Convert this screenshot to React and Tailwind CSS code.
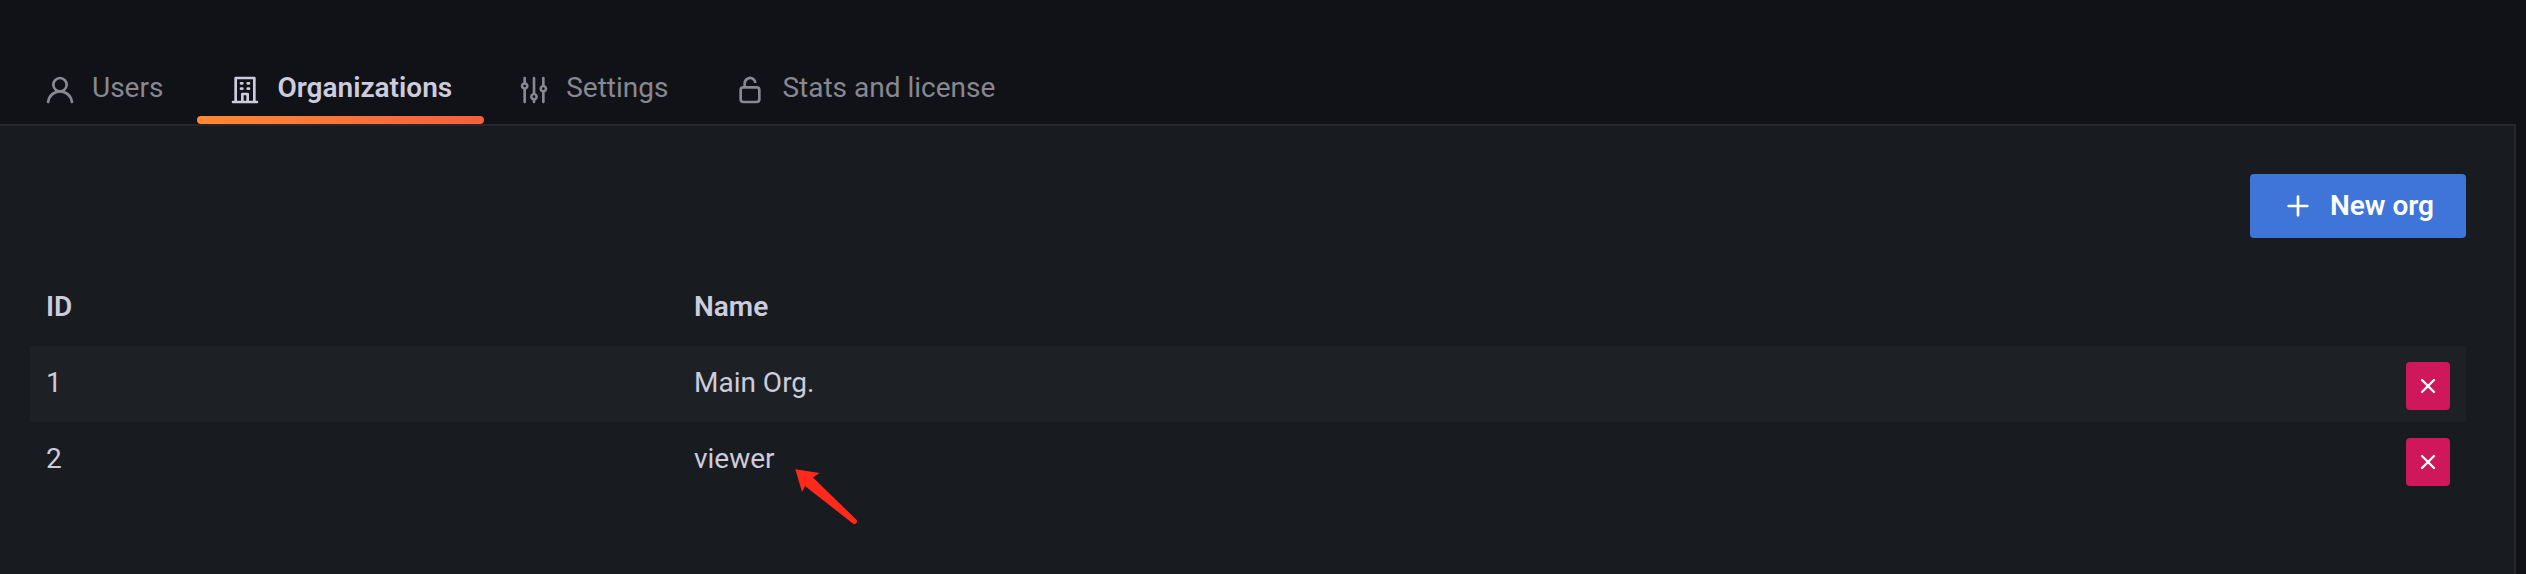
import React from "react";

const icons = {
  user: "M15.71,12.71a6,6,0,1,0-7.42,0,10,10,0,0,0-6.22,8.18,1,1,0,0,0,2,.22,8,8,0,0,1,15.9,0,1,1,0,0,0,1,.89h.11a1,1,0,0,0,.88-1.1A10,10,0,0,0,15.71,12.71ZM12,12a4,4,0,1,1,4-4A4,4,0,0,1,12,12Z",
  building:
    "M14,8h1a1,1,0,0,0,0-2H14a1,1,0,0,0,0,2Zm0,4h1a1,1,0,0,0,0-2H14a1,1,0,0,0,0,2ZM9,8h1a1,1,0,0,0,0-2H9A1,1,0,0,0,9,8Zm0,4h1a1,1,0,0,0,0-2H9a1,1,0,0,0,0,2Zm12,8H20V3a1,1,0,0,0-1-1H5A1,1,0,0,0,4,3V20H3a1,1,0,0,0,0,2H21a1,1,0,0,0,0-2Zm-8,0H11V16h2Zm5,0H15V15a1,1,0,0,0-1-1H10a1,1,0,0,0-1,1v5H6V4H18Z",
  sliders:
    "M20,8.18V3a1,1,0,0,0-2,0V8.18a3,3,0,0,0,0,5.64V21a1,1,0,0,0,2,0V13.82a3,3,0,0,0,0-5.64ZM19,12a1,1,0,1,1,1-1A1,1,0,0,1,19,12Zm-6,2.18V3a1,1,0,0,0-2,0V14.18a3,3,0,0,0,0,5.64V21a1,1,0,0,0,2,0V19.82a3,3,0,0,0,0-5.64ZM12,18a1,1,0,1,1,1-1A1,1,0,0,1,12,18ZM6,6.18V3A1,1,0,0,0,4,3V6.18a3,3,0,0,0,0,5.64V21a1,1,0,0,0,2,0V11.82A3,3,0,0,0,6,6.18ZM5,10A1,1,0,1,1,6,9,1,1,0,0,1,5,10Z",
  unlock:
    "M17,9H9V7a3,3,0,0,1,5.12-2.13,3.08,3.08,0,0,1,.78,1.38,1,1,0,1,0,1.94-.5,5.09,5.09,0,0,0-1.31-2.29A5,5,0,0,0,7,7V9a3,3,0,0,0-3,3v7a3,3,0,0,0,3,3H17a3,3,0,0,0,3-3V12A3,3,0,0,0,17,9Zm1,10a1,1,0,0,1-1,1H7a1,1,0,0,1-1-1V12a1,1,0,0,1,1-1H17a1,1,0,0,1,1,1Z",
  plus: "M19,11H13V5a1,1,0,0,0-2,0v6H5a1,1,0,0,0,0,2h6v6a1,1,0,0,0,2,0V13h6a1,1,0,0,0,0-2Z",
};

function Icon({ name }) {
  return (
    <svg viewBox="0 0 24 24" fill="currentColor" aria-hidden="true" className="size-8 shrink-0">
      <path d={icons[name]} />
    </svg>
  );
}

function CloseIcon() {
  return (
    <svg
      viewBox="0 0 24 24"
      fill="none"
      stroke="currentColor"
      strokeWidth="2.3"
      strokeLinecap="round"
      aria-hidden="true"
      className="size-6 shrink-0"
    >
      <path d="M6 6L18 18M18 6L6 18" />
    </svg>
  );
}

const tabs = [
  { label: "Users", icon: "user" },
  { label: "Organizations", icon: "building", active: true },
  { label: "Settings", icon: "sliders" },
  { label: "Stats and license", icon: "unlock" },
];

const orgs = [
  { id: 1, name: "Main Org." },
  { id: 2, name: "viewer", marked: true },
];

function Tab({ label, icon, active }) {
  return (
    <li>
      <a
        href="#"
        aria-current={active ? "page" : undefined}
        className={`flex flex-col ${active ? "font-semibold text-[#ccccdc]" : "text-[#878891]"}`}
      >
        <span className="flex items-end gap-4 px-8 pb-2.5">
          <Icon name={icon} />
          <span className="pb-0.5">{label}</span>
        </span>
        <span className={`h-2 rounded-full ${active ? "bg-linear-to-r from-[#ff8833] to-[#f55f3e]" : ""}`} />
      </a>
    </li>
  );
}

function Arrow() {
  return (
    <svg
      viewBox="0 0 64 56"
      aria-hidden="true"
      className="absolute top-full left-full -mt-1.5 ml-5 h-14 w-16"
      fill="#ff2a1c"
    >
      <path d="M0.3 0.3L24.5 4L18 8.5L61.2 50.5A2.6 2.6 0 0 1 57.5 54.2L10 17L7 23Z" />
    </svg>
  );
}

export default function App() {
  return (
    <div className="flex min-h-screen flex-col bg-[#111217] font-[Roboto,sans-serif] text-[28px] leading-8 text-[#ccccdc]">
      <nav className="pt-18 pl-3">
        <ul className="flex gap-0.5">
          {tabs.map((tab) => (
            <Tab key={tab.label} {...tab} />
          ))}
        </ul>
      </nav>
      <main className="mr-2.5 flex-1 border-t-2 border-r-2 border-[#25272c] bg-[#181b1f] pt-12 pr-12 pl-7.5">
        <div className="flex justify-end">
          <button
            type="button"
            className="flex h-16 items-center gap-4 rounded-sm bg-[#3f74d9] px-8 font-semibold text-white"
          >
            <Icon name="plus" />
            New org
          </button>
        </div>
        <table className="mt-8 w-full text-left">
          <thead>
            <tr className="h-19">
              <th className="w-[26.6%] px-4 pb-0.5 font-semibold">ID</th>
              <th className="px-4 pb-0.5 font-semibold">Name</th>
              <th className="w-19" aria-label="Delete" />
            </tr>
          </thead>
          <tbody>
            {orgs.map((org) => (
              <tr key={org.id} className="h-19 odd:bg-[#1d2024]">
                <td className="px-4 pb-0.5">{org.id}</td>
                <td className="px-4 pb-0.5">
                  <span className="relative inline-block align-top">
                    {org.name}
                    {org.marked && <Arrow />}
                  </span>
                </td>
                <td className="px-4 pt-1">
                  <button
                    type="button"
                    aria-label={`Delete ${org.name}`}
                    className="flex h-12 w-11 items-center justify-center rounded-sm bg-[#cf185c] text-white"
                  >
                    <CloseIcon />
                  </button>
                </td>
              </tr>
            ))}
          </tbody>
        </table>
      </main>
    </div>
  );
}
